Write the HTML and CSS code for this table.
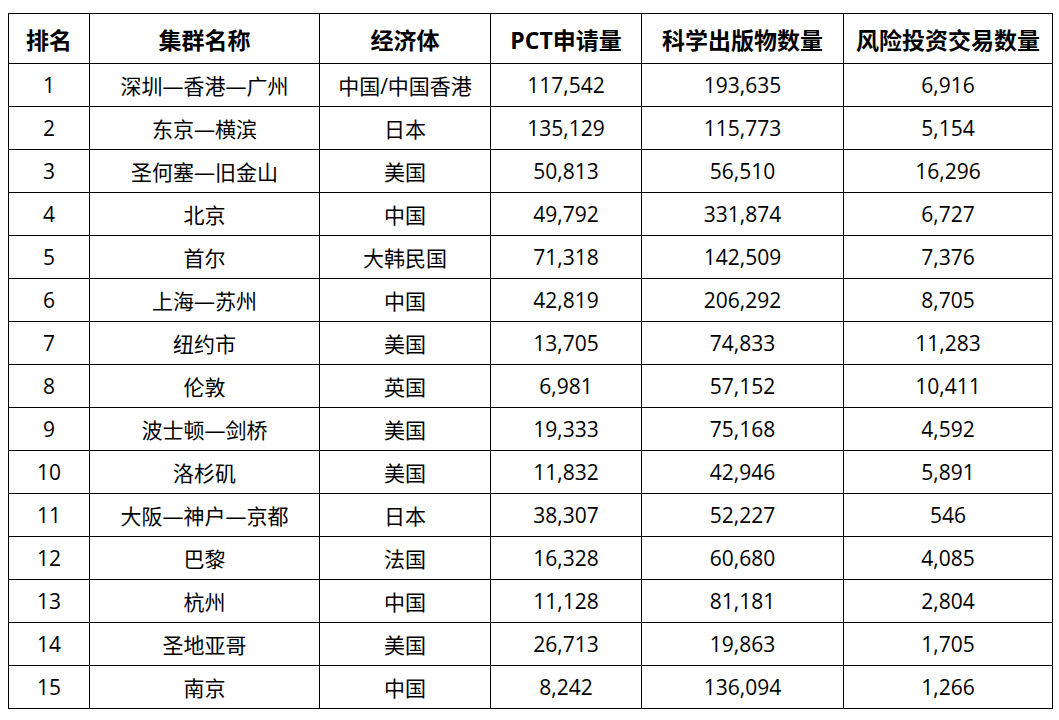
FILE: index.html
```html
<!DOCTYPE html>
<html lang="zh-CN">
<head>
<meta charset="utf-8">
<link rel="stylesheet" href="styles.css">
</head>
<body>
<table class="rank">
  <colgroup>
    <col class="c1"><col class="c2"><col class="c3"><col class="c4"><col class="c5"><col class="c6">
  </colgroup>
  <thead>
    <tr><th>排名</th><th>集群名称</th><th>经济体</th><th>PCT申请量</th><th>科学出版物数量</th><th>风险投资交易数量</th></tr>
  </thead>
  <tbody>
    <tr><td>1</td><td>深圳—香港—广州</td><td>中国/中国香港</td><td>117,542</td><td>193,635</td><td>6,916</td></tr>
    <tr><td>2</td><td>东京—横滨</td><td>日本</td><td>135,129</td><td>115,773</td><td>5,154</td></tr>
    <tr><td>3</td><td>圣何塞—旧金山</td><td>美国</td><td>50,813</td><td>56,510</td><td>16,296</td></tr>
    <tr><td>4</td><td>北京</td><td>中国</td><td>49,792</td><td>331,874</td><td>6,727</td></tr>
    <tr><td>5</td><td>首尔</td><td>大韩民国</td><td>71,318</td><td>142,509</td><td>7,376</td></tr>
    <tr><td>6</td><td>上海—苏州</td><td>中国</td><td>42,819</td><td>206,292</td><td>8,705</td></tr>
    <tr><td>7</td><td>纽约市</td><td>美国</td><td>13,705</td><td>74,833</td><td>11,283</td></tr>
    <tr><td>8</td><td>伦敦</td><td>英国</td><td>6,981</td><td>57,152</td><td>10,411</td></tr>
    <tr><td>9</td><td>波士顿—剑桥</td><td>美国</td><td>19,333</td><td>75,168</td><td>4,592</td></tr>
    <tr><td>10</td><td>洛杉矶</td><td>美国</td><td>11,832</td><td>42,946</td><td>5,891</td></tr>
    <tr><td>11</td><td>大阪—神户—京都</td><td>日本</td><td>38,307</td><td>52,227</td><td>546</td></tr>
    <tr><td>12</td><td>巴黎</td><td>法国</td><td>16,328</td><td>60,680</td><td>4,085</td></tr>
    <tr><td>13</td><td>杭州</td><td>中国</td><td>11,128</td><td>81,181</td><td>2,804</td></tr>
    <tr><td>14</td><td>圣地亚哥</td><td>美国</td><td>26,713</td><td>19,863</td><td>1,705</td></tr>
    <tr><td>15</td><td>南京</td><td>中国</td><td>8,242</td><td>136,094</td><td>1,266</td></tr>
  </tbody>
</table>
</body>
</html>
```

FILE: styles.css
```css
html, body {
  margin: 0;
  padding: 0;
  background: #fff;
}
body {
  padding: 13px 0 0 8px;
  font-family: "Open Sans", "Noto Sans CJK SC", sans-serif;
  color: #000;
}
.rank {
  border-collapse: collapse;
  table-layout: fixed;
  width: 1045px;
}
.c1 { width: 81px; }
.c2 { width: 230px; }
.c3 { width: 171px; }
.c4 { width: 151px; }
.c5 { width: 202px; }
.c6 { width: 209px; }
.rank th, .rank td {
  border: 1px solid #000;
  text-align: center;
  padding: 0;
  white-space: nowrap;
  overflow: hidden;
}
.rank th {
  height: 49px;
  font-size: 23px;
  font-weight: bold;
}
.rank td {
  height: 42px;
  font-size: 21px;
}
```
